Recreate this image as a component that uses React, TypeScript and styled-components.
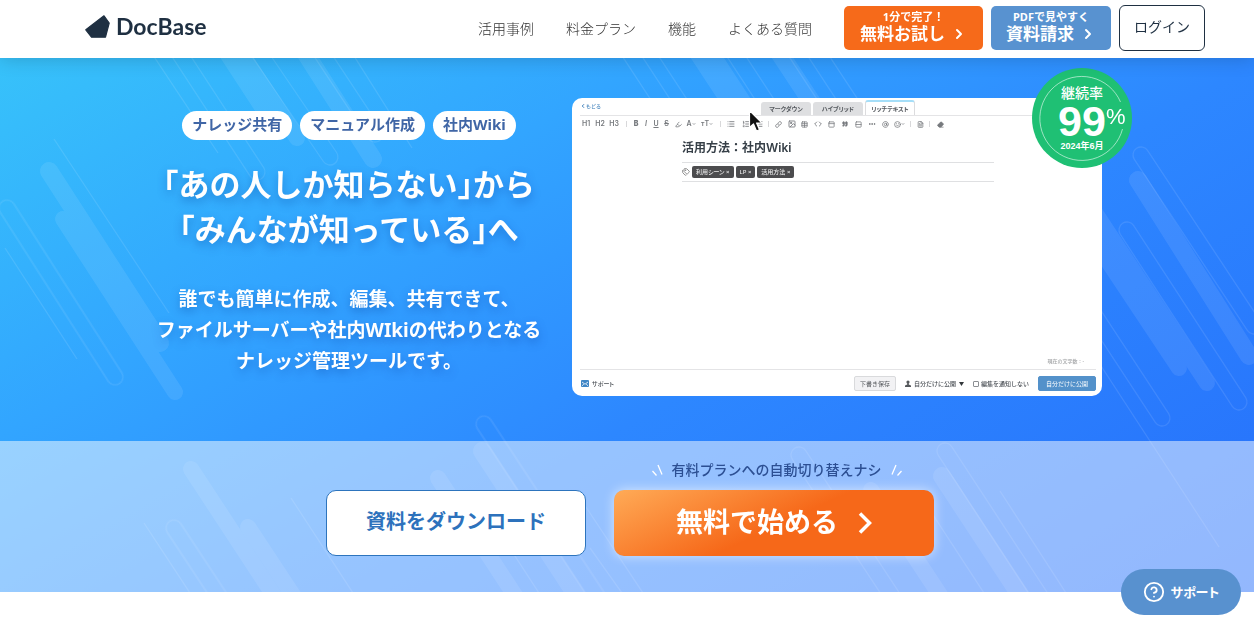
import React from 'react';
import styled, { createGlobalStyle } from 'styled-components';
import {
  AtSign,
  ChevronDown,
  ChevronLeft,
  ChevronRight,
  CircleHelp,
  Code,
  Eraser,
  FileText,
  Highlighter,
  Image as ImageIcon,
  Link as LinkIcon,
  List,
  ListChecks,
  ListOrdered,
  Mail,
  PanelTop,
  Quote,
  Rows2,
  Smile,
  Table,
  Tags,
  Ellipsis,
} from 'lucide-react';

const fontStack = `"Noto Sans", "Noto Sans CJK JP", sans-serif`;

const GlobalStyle = createGlobalStyle`
  *, *::before, *::after { box-sizing: border-box; }
  body { margin: 0; background: #fff; color: #1f3042; font-family: ${fontStack}; }
  button { font-family: inherit; cursor: pointer; }
  a { text-decoration: none; color: inherit; }
`;

/* ---------- Header ---------- */

const Header = styled.header`
  position: relative;
  z-index: 2;
  display: flex;
  align-items: center;
  justify-content: space-between;
  height: 58px;
  padding: 0 49px 2px 85px;
  background: #fff;
  box-shadow: 0 0 20px rgba(0, 0, 0, 0.2);
`;

const Logo = styled.a`
  display: flex;
  align-items: center;
  gap: 6px;
  padding-bottom: 4px;
  font-family: Lato, sans-serif;
  font-size: 23px;
  line-height: 28px;
  font-weight: 700;
  color: #1f3042;
`;

const HeaderRight = styled.div`
  display: flex;
  align-items: center;
  gap: 32px;
`;

const Nav = styled.nav`
  display: flex;
  gap: 32px;
  padding-top: 2px;
`;

const NavLink = styled.a`
  font-size: 14px;
  line-height: 20px;
  font-weight: 300;
  color: #333;
`;

const HeaderActions = styled.div`
  display: flex;
  align-items: center;
  gap: 8px;
`;

const HeaderCta = styled.a<{ $bg: string; $side: number }>`
  display: flex;
  flex-direction: column;
  align-items: center;
  height: 44px;
  padding: 4px ${(p) => p.$side}px 0;
  border-radius: 5px;
  background: ${(p) => p.$bg};
  color: #fff;
  font-weight: 700;
`;

const CtaSmall = styled.span`
  font-size: 11px;
  line-height: 14px;
`;

const CtaLarge = styled.span`
  display: flex;
  align-items: center;
  gap: 6px;
  font-size: 17px;
  line-height: 20px;
`;

const LoginLink = styled.a`
  height: 46px;
  padding: 11px 14px;
  border: 1px solid #1f3042;
  border-radius: 6px;
  font-size: 14px;
  line-height: 20px;
  font-weight: 400;
`;

/* ---------- Hero ---------- */

const Stage = styled.div`
  position: relative;
  background: linear-gradient(150deg, #37c2fa 0%, #32a5ff 30%, #2d87ff 58%, #266ffb 100%);
`;

const Art = styled.svg`
  position: absolute;
  inset: 0;
  width: 100%;
  height: 100%;
`;

const Hero = styled.section`
  position: relative;
  display: grid;
  grid-template-columns: 394fr 530fr;
  gap: 26px;
  max-width: 950px;
  margin: 0 auto;
  padding: 40px 0 45px;
`;

const Copy = styled.div`
  display: flex;
  flex-direction: column;
  align-items: center;
  padding-top: 13px;
  text-align: center;
  white-space: nowrap;
  color: #fff;
`;

const TagRow = styled.ul`
  display: flex;
  gap: 8px;
  margin: 0;
  padding: 0;
  list-style: none;
`;

const Tag = styled.li`
  padding: 2px 10px 5px;
  border-radius: 15px;
  background: #fff;
  color: #4066a6;
  font-size: 15px;
  line-height: 22px;
  font-weight: 700;
`;

const Title = styled.h1`
  margin: 22px 0 0;
  font-size: 31px;
  line-height: 45px;
  font-weight: 700;
  font-feature-settings: 'halt';
  text-shadow: 0 4px 10px rgba(0, 50, 140, 0.35);
`;

const Lead = styled.p`
  margin: 32px 0 0;
  font-size: 19px;
  line-height: 31px;
  font-weight: 700;
  text-shadow: 0 4px 10px rgba(0, 50, 140, 0.35);
`;

const Visual = styled.div`
  position: relative;
  display: flex;
`;

/* ---------- Editor preview ---------- */

const Editor = styled.div`
  display: flex;
  flex: 1;
  flex-direction: column;
  min-height: 298px;
  padding: 2px 6px 5px 8px;
  border-radius: 10px;
  background: #fff;
  font-size: 6px;
  line-height: 8px;
  font-weight: 500;
  color: #4a4f55;
  white-space: nowrap;
`;

const EditorTop = styled.div`
  display: flex;
  align-items: flex-end;
  justify-content: space-between;
  height: 16px;
  padding-right: 181px;
  border-bottom: 1px solid #e4e4e6;
`;

const BackLink = styled.a`
  display: flex;
  align-items: center;
  padding-bottom: 5px;
  color: #3f80bb;
  font-size: 5px;
`;

const TabList = styled.div`
  display: flex;
  align-items: flex-end;
  gap: 2px;
`;

const Tab = styled.button<{ $active?: boolean }>`
  width: 50px;
  height: ${(p) => (p.$active ? 15 : 13)}px;
  padding: 0;
  border: ${(p) => (p.$active ? '1px solid #dcdcde' : '0')};
  border-top: ${(p) => (p.$active ? '2px solid #a5def8' : '0')};
  border-bottom: 0;
  border-radius: 3px 3px 0 0;
  background: ${(p) => (p.$active ? '#fff' : '#dedfe1')};
  color: #55595e;
  font-size: 6px;
  line-height: 12px;
  font-weight: 700;
  font-feature-settings: 'palt';
`;

const Toolbar = styled.div`
  display: flex;
  align-items: center;
  height: 16px;
  margin-left: -1px;
`;

const Tool = styled.button<{ $w: number }>`
  display: flex;
  align-items: center;
  justify-content: center;
  flex: none;
  width: ${(p) => p.$w}px;
  padding: 0;
  border: 0;
  background: none;
  color: #777a7e;
  font-family: Inter, sans-serif;
  font-size: 7px;
  line-height: 8px;
  font-weight: 600;
`;

const Divider = styled.span<{ $w: number }>`
  display: flex;
  justify-content: center;
  flex: none;
  width: ${(p) => p.$w}px;
  &::before {
    content: '';
    width: 1px;
    height: 6px;
    background: #d8d8da;
  }
`;

const Doc = styled.div`
  flex: 1;
  margin: 0 102px;
`;

const DocTitle = styled.h2`
  margin: 0;
  padding: 7px 0 5px;
  border-bottom: 1px solid #dfe0e2;
  font-family: Inter, "Noto Sans CJK JP", sans-serif;
  font-size: 12px;
  line-height: 18px;
  font-weight: 600;
  color: #363f47;
`;

const DocTags = styled.div`
  display: flex;
  align-items: center;
  gap: 2px;
  height: 19px;
  border-bottom: 1px solid #dfe0e2;
  color: #777;
`;

const DocTag = styled.span`
  padding: 2px 4px;
  border-radius: 2px;
  background: #4c4c4e;
  color: #e8e8e8;
  font-size: 6px;
  line-height: 8px;
  font-feature-settings: 'palt';
`;

const Count = styled.div`
  padding: 0 12px 4px;
  border-bottom: 1px solid #e4e4e6;
  text-align: right;
  color: #a4a6a8;
  font-size: 5px;
`;

const EditorFoot = styled.div`
  display: flex;
  align-items: center;
  justify-content: space-between;
  padding: 6px 0 0 1px;
`;

const FootGroup = styled.div<{ $gap: number }>`
  display: flex;
  align-items: center;
  gap: ${(p) => p.$gap}px;
`;

const SupportNote = styled.span`
  font-feature-settings: 'palt';
`;

const FootButton = styled.button<{ $primary?: boolean }>`
  width: ${(p) => (p.$primary ? 58 : 42)}px;
  height: 15px;
  padding: 0;
  border: 1px solid ${(p) => (p.$primary ? '#5391ca' : '#d9dadc')};
  border-radius: 2px;
  background: ${(p) => (p.$primary ? '#5391ca' : '#f2f2f4')};
  color: ${(p) => (p.$primary ? '#fff' : '#55585c')};
  font-size: 6px;
  line-height: 8px;
`;

const CheckLabel = styled.label`
  display: flex;
  align-items: center;
  gap: 2px;
  input {
    appearance: none;
    width: 6px;
    height: 6px;
    margin: 0;
    border: 1px solid #8c8f93;
    border-radius: 1px;
  }
`;

const Cursor = styled.svg`
  position: absolute;
  top: 11px;
  left: 176px;
`;

/* ---------- Badge ---------- */

const Badge = styled.div`
  position: absolute;
  top: -30px;
  right: -30px;
  display: flex;
  flex-direction: column;
  align-items: center;
  width: 100px;
  height: 100px;
  padding-top: 16px;
  border-radius: 50%;
  background: #1fc074;
  color: #fff;
`;

const BadgeRing = styled.svg`
  position: absolute;
  inset: 0;
`;

const BadgeLabel = styled.span`
  font-size: 14px;
  line-height: 18px;
  font-weight: 500;
`;

const BadgeNumber = styled.span`
  position: relative;
  font-family: "Liberation Sans", sans-serif;
  font-size: 43px;
  line-height: 38px;
  font-weight: 700;
`;

const Percent = styled.span`
  position: absolute;
  top: 3px;
  left: 100%;
  font-size: 22px;
  line-height: 24px;
  font-weight: 400;
`;

const BadgeDate = styled.span`
  font-family: "Liberation Sans", "Noto Sans CJK JP", sans-serif;
  font-size: 9px;
  line-height: 12px;
  font-weight: 700;
`;

/* ---------- Call to action ---------- */

const CtaBand = styled.section`
  position: relative;
  display: flex;
  align-items: flex-end;
  justify-content: center;
  gap: 28px;
  padding: 19px 0 36px 6px;
  background: rgba(255, 255, 255, 0.5);
`;

const DownloadButton = styled.a`
  display: flex;
  align-items: center;
  justify-content: center;
  width: 260px;
  height: 66px;
  padding-bottom: 2px;
  border: 1px solid #2d74bd;
  border-radius: 10px;
  background: #fff;
  color: #2d72bc;
  font-size: 20px;
  line-height: 30px;
  font-weight: 700;
`;

const TrialColumn = styled.div`
  display: flex;
  flex-direction: column;
  align-items: center;
  gap: 10px;
`;

const Caption = styled.p`
  display: flex;
  align-items: center;
  gap: 9px;
  margin: 0;
  padding-left: 5px;
  color: #2c4f93;
  font-size: 14px;
  line-height: 20px;
  font-weight: 500;
`;

const TrialButton = styled.a`
  display: flex;
  align-items: center;
  justify-content: center;
  gap: 20px;
  width: 320px;
  height: 66px;
  border-radius: 10px;
  background: linear-gradient(155deg, #ffab57 0%, #f66819 52%);
  box-shadow: 0 0 12px rgba(255, 255, 255, 0.6);
  color: #fff;
  font-size: 27px;
  line-height: 36px;
  font-weight: 700;
`;

const TrialText = styled.span`
  padding-bottom: 2px;
`;

const Support = styled.button`
  position: fixed;
  right: 13px;
  bottom: 9px;
  z-index: 3;
  display: flex;
  align-items: center;
  justify-content: center;
  gap: 6px;
  width: 120px;
  height: 46px;
  padding: 0;
  border: 0;
  border-radius: 23px;
  background: #5891cf;
  color: #fff;
  font-size: 13px;
  line-height: 20px;
  font-weight: 700;
  font-feature-settings: 'palt';
`;

/* ---------- Decorative diagonal strips ---------- */

type Strip = [number, number, number, number, number];

// Each entry: start x, start y, end x, end y, radius.
const solidStrips: Strip[] = [
  [200, 10, 275, 125, 9],
  [213, 10, 297, 138, 8],
  [278, 10, 373, 159, 9],
  [49, 171, 160, 343, 9],
  [63, 219, 175, 392, 8],
  [670, 10, 760, 147, 9],
  [683, 10, 770, 143, 8],
  [751, 10, 840, 145, 9],
  [1138, 180, 1249, 356, 9],
  [1080, 219, 1179, 368, 8],
  [1086, 199, 1207, 383, 8],
  [191, 469, 290, 620, 8],
  [248, 527, 310, 621, 8],
  [482, 451, 594, 622, 9],
  [438, 478, 533, 623, 8],
  [942, 476, 1038, 622, 9],
  [871, 490, 959, 624, 8],
];

const outlineStrips: Strip[] = [
  [151, 10, 257, 172, 8],
  [230, 10, 330, 157, 8],
  [293, 10, 375, 134, 8],
  [7, 208, 115, 377, 8],
  [620, 10, 700, 132, 7],
  [706, 10, 780, 123, 8],
  [768, 10, 850, 135, 8],
  [1141, 155, 1254, 326, 8],
  [1127, 230, 1239, 402, 8],
  [1080, 293, 1162, 418, 8],
  [174, 528, 236, 622, 8],
  [484, 424, 614, 622, 8],
  [799, 455, 909, 622, 8],
  [945, 451, 1057, 622, 8],
];

const thinLines: Strip[] = [
  [123, 10, 218, 153, 0],
  [325, 10, 412, 148, 0],
  [5, 248, 77, 359, 0],
  [54, 139, 169, 313, 0],
  [592, 10, 670, 129, 0],
  [799, 10, 880, 133, 0],
  [1090, 349, 1219, 547, 0],
  [144, 523, 190, 593, 0],
  [291, 498, 353, 593, 0],
  [500, 533, 539, 593, 0],
  [578, 495, 643, 593, 0],
  [590, 548, 622, 593, 0],
  [1000, 491, 1066, 593, 0],
  [920, 495, 984, 593, 0],
];

const Pill = ({ strip, outline }: { strip: Strip; outline?: boolean }) => {
  const [x1, y1, x2, y2, r] = strip;
  const length = Math.hypot(x2 - x1, y2 - y1);
  const angle = (Math.atan2(y2 - y1, x2 - x1) * 180) / Math.PI;
  return (
    <rect
      x={-r}
      y={-r}
      width={length + 2 * r}
      height={2 * r}
      rx={r}
      transform={`translate(${x1} ${y1}) rotate(${angle})`}
      fill={outline ? 'none' : '#fff'}
      stroke={outline ? '#fff' : 'none'}
      strokeOpacity={0.1}
      strokeWidth={1.3}
    />
  );
};

const BackgroundArt = () => (
  <Art viewBox="0 58 1254 534" preserveAspectRatio="xMidYMid slice" aria-hidden="true">
    <g opacity="0.09">
      {solidStrips.map((s, i) => (
        <Pill key={i} strip={s} />
      ))}
    </g>
    {outlineStrips.map((s, i) => (
      <Pill key={i} strip={s} outline />
    ))}
    {thinLines.map(([x1, y1, x2, y2], i) => (
      <line key={i} x1={x1} y1={y1} x2={x2} y2={y2} stroke="#fff" strokeOpacity={0.11} strokeWidth={1.3} />
    ))}
  </Art>
);

/* ---------- Editor toolbar data ---------- */

const icon = { size: 7, strokeWidth: 2.6 };

type ToolItem = { w: number; label?: string; node?: React.ReactNode };

const tools: ToolItem[] = [
  { w: 14, label: '見出し1', node: 'H1' },
  { w: 14, label: '見出し2', node: 'H2' },
  { w: 14, label: '見出し3', node: 'H3' },
  { w: 10 },
  { w: 10, label: '太字', node: <b>B</b> },
  { w: 10, label: '斜体', node: <i>I</i> },
  { w: 10, label: '下線', node: <u>U</u> },
  { w: 11, label: '取り消し線', node: <s>S</s> },
  { w: 12, label: 'マーカー', node: <Highlighter {...icon} /> },
  { w: 14, label: '文字色', node: <>A<ChevronDown size={4} strokeWidth={4} /></> },
  { w: 18, label: '文字サイズ', node: <>тT<ChevronDown size={4} strokeWidth={4} /></> },
  { w: 8 },
  { w: 14, label: 'リスト', node: <List size={8} strokeWidth={2.6} /> },
  { w: 15, label: '番号リスト', node: <ListOrdered size={8} strokeWidth={2.6} /> },
  { w: 12, label: 'チェックリスト', node: <ListChecks size={8} strokeWidth={2.6} /> },
  { w: 6 },
  { w: 14, label: 'リンク', node: <LinkIcon {...icon} /> },
  { w: 13, label: '画像', node: <ImageIcon size={8} strokeWidth={2.6} /> },
  { w: 13, label: '表', node: <Table {...icon} /> },
  { w: 14, label: 'コード', node: <Code size={8} strokeWidth={2.6} /> },
  { w: 13, label: 'テンプレート', node: <PanelTop {...icon} /> },
  { w: 14, label: '引用', node: <Quote size={6} strokeWidth={2.6} fill="currentColor" /> },
  { w: 13, label: '区切り', node: <Rows2 {...icon} /> },
  { w: 14, label: '折りたたみ', node: <Ellipsis size={8} strokeWidth={3} /> },
  { w: 13, label: 'メンション', node: <AtSign {...icon} /> },
  { w: 14, label: '絵文字', node: <><Smile {...icon} /><ChevronDown size={4} strokeWidth={4} /></> },
  { w: 8 },
  { w: 12, label: '文書', node: <FileText {...icon} /> },
  { w: 6 },
  { w: 16, label: '書式を消去', node: <Eraser size={7} strokeWidth={2.6} fill="currentColor" /> },
];

const EditorPreview = () => (
  <Editor>
    <EditorTop>
      <BackLink href="#back">
        <ChevronLeft size={6} strokeWidth={4} />
        もどる
      </BackLink>
      <TabList>
        <Tab type="button">マークダウン</Tab>
        <Tab type="button">ハイブリッド</Tab>
        <Tab type="button" $active>
          リッチテキスト
        </Tab>
      </TabList>
    </EditorTop>
    <Toolbar>
      {tools.map((t, i) =>
        t.label ? (
          <Tool key={i} type="button" $w={t.w} aria-label={t.label}>
            {t.node}
          </Tool>
        ) : (
          <Divider key={i} $w={t.w} />
        ),
      )}
    </Toolbar>
    <Doc>
      <DocTitle>活用方法：社内Wiki</DocTitle>
      <DocTags>
        <Tags size={8} strokeWidth={2.4} />
        <DocTag>利用シーン ×</DocTag>
        <DocTag>LP ×</DocTag>
        <DocTag>活用方法 ×</DocTag>
      </DocTags>
    </Doc>
    <Count>現在の文字数：-</Count>
    <EditorFoot>
      <FootGroup $gap={3}>
        <svg width="8" height="7" viewBox="0 0 8 7" aria-hidden="true">
          <rect width="8" height="7" rx="1" fill="#3f86c6" />
          <path d="M1 2l3 2.200L7 2M1 5.800l1.800-1.600M7 5.800L5.200 4.200" fill="none" stroke="#fff" strokeWidth="0.8" />
        </svg>
        <SupportNote>サポート</SupportNote>
      </FootGroup>
      <FootGroup $gap={9}>
        <FootButton type="button">下書き保存</FootButton>
        <FootGroup $gap={3}>
          <svg width="6" height="7" viewBox="0 0 6 7" fill="#55585c" aria-hidden="true">
            <circle cx="3" cy="2" r="1.6" />
            <path d="M2.2 3h1.6v1.6L6 5.400V7H0V5.400l2.200-.8z" />
          </svg>
          自分だけに公開
          <svg width="5" height="4" viewBox="0 0 5 4" fill="#33373b" aria-hidden="true">
            <path d="M0 0h5L2.500 4z" />
          </svg>
        </FootGroup>
        <CheckLabel>
          <input type="checkbox" />
          編集を通知しない
        </CheckLabel>
        <FootButton type="button" $primary>
          自分だけに公開
        </FootButton>
      </FootGroup>
    </EditorFoot>
  </Editor>
);

const Rays = ({ flip }: { flip?: boolean }) => (
  <svg width="11" height="12" viewBox="0 0 11 12" fill="none" stroke="#fff" strokeWidth="1.3" aria-hidden="true">
    <path d={flip ? 'M5 1L1 10.500M10.500 7L6.500 11.500' : 'M6 1l4 9.500M.5 7l4 4.500'} />
  </svg>
);

export default function App() {
  return (
    <>
      <GlobalStyle />
      <Header>
        <Logo href="#top">
          <svg width="25" height="23" viewBox="0 0 25 23" aria-hidden="true">
            <path
              d="M19 .8L.8 14.800L6.500 22.200H20.500L24.200 8z"
              fill="#1f3042"
              stroke="#1f3042"
              strokeWidth="1.200"
              strokeLinejoin="round"
            />
          </svg>
          DocBase
        </Logo>
        <HeaderRight>
          <Nav>
            <NavLink href="#cases">活用事例</NavLink>
            <NavLink href="#price">料金プラン</NavLink>
            <NavLink href="#features">機能</NavLink>
            <NavLink href="#faq">よくある質問</NavLink>
          </Nav>
          <HeaderActions>
            <HeaderCta href="#trial" $bg="#f66a1a" $side={16}>
              <CtaSmall>1分で完了！</CtaSmall>
              <CtaLarge>
                無料お試し
                <ChevronRight size={16} strokeWidth={3} />
              </CtaLarge>
            </HeaderCta>
            <HeaderCta href="#docs" $bg="#5892d0" $side={15}>
              <CtaSmall>PDFで見やすく</CtaSmall>
              <CtaLarge>
                資料請求
                <ChevronRight size={16} strokeWidth={3} />
              </CtaLarge>
            </HeaderCta>
            <LoginLink href="#login">ログイン</LoginLink>
          </HeaderActions>
        </HeaderRight>
      </Header>
      <main>
        <Stage>
          <BackgroundArt />
          <Hero>
            <Copy>
              <TagRow>
                <Tag>ナレッジ共有</Tag>
                <Tag>マニュアル作成</Tag>
                <Tag>社内Wiki</Tag>
              </TagRow>
              <Title>
                「あの人しか知らない」から
                <br />
                「みんなが知っている」へ
              </Title>
              <Lead>
                誰でも簡単に作成、編集、共有できて、
                <br />
                ファイルサーバーや社内WIkiの代わりとなる
                <br />
                ナレッジ管理ツールです。
              </Lead>
            </Copy>
            <Visual>
              <EditorPreview />
              <Cursor width="16" height="24" viewBox="0 0 16 24" aria-hidden="true">
                <path
                  d="M1.500 1.500V18.500L5.500 15L8.500 22L11.500 20.700L8.600 14H14z"
                  fill="#111"
                  stroke="#fff"
                  strokeWidth="1.200"
                  strokeLinejoin="round"
                />
              </Cursor>
              <Badge>
                <BadgeRing width="100" height="100" viewBox="0 0 100 100" fill="none" aria-hidden="true">
                  <path d="M88.500 34A42 42 0 1 0 90.500 61" stroke="#fff" strokeOpacity="0.7" strokeWidth="0.8" />
                </BadgeRing>
                <BadgeLabel>継続率</BadgeLabel>
                <BadgeNumber>
                  99<Percent>%</Percent>
                </BadgeNumber>
                <BadgeDate>2024年6月</BadgeDate>
              </Badge>
            </Visual>
          </Hero>
          <CtaBand>
            <DownloadButton href="#download">資料をダウンロード</DownloadButton>
            <TrialColumn>
              <Caption>
                <Rays />
                有料プランへの自動切り替えナシ
                <Rays flip />
              </Caption>
              <TrialButton href="#start">
                <TrialText>無料で始める</TrialText>
                <svg width="14" height="22" viewBox="0 0 14 22" fill="none" stroke="#fff" strokeWidth="3.500" aria-hidden="true">
                  <path d="M2 1.500L11.500 11L2 20.500" />
                </svg>
              </TrialButton>
            </TrialColumn>
          </CtaBand>
        </Stage>
      </main>
      <Support type="button">
        <CircleHelp size={22} strokeWidth={2} />
        サポート
      </Support>
    </>
  );
}
